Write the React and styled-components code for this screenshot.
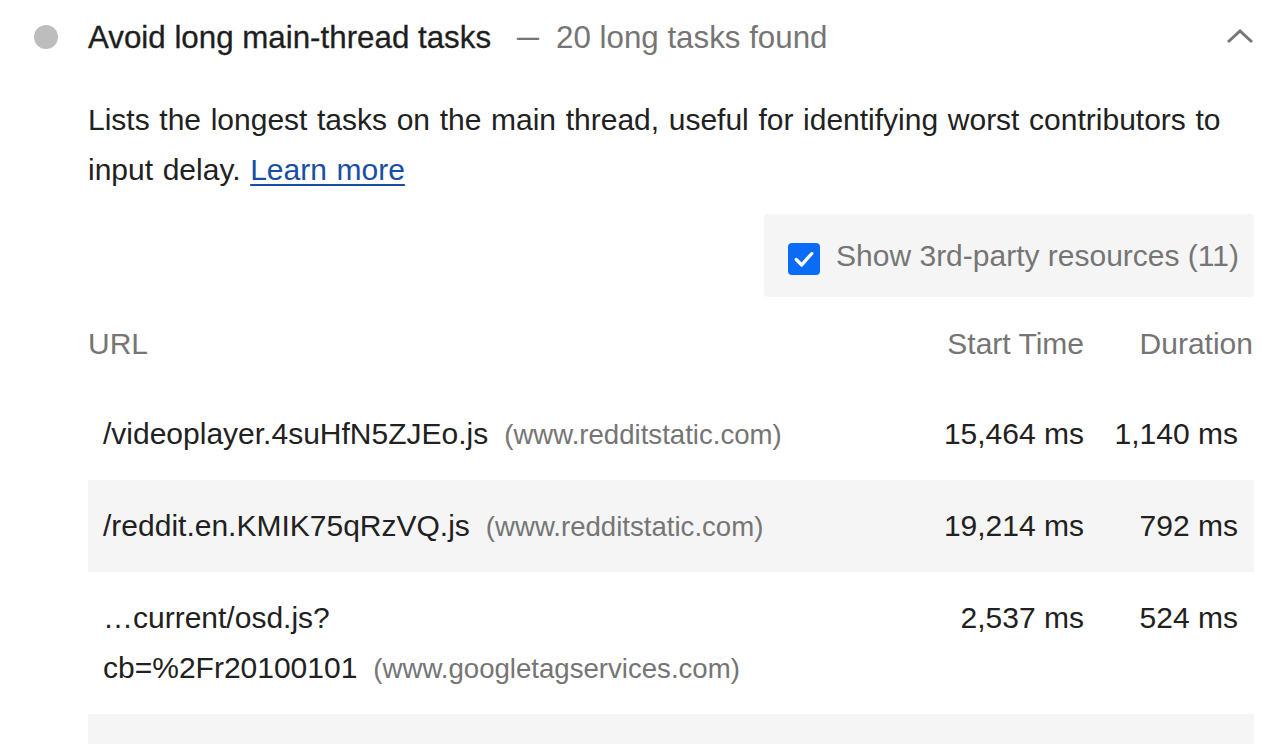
import React from 'react';
import styled, { createGlobalStyle } from 'styled-components';

const GlobalStyle = createGlobalStyle`
  html, body {
    margin: 0;
    padding: 0;
    background: #fff;
  }
  body {
    font-family: "Liberation Sans", Arial, Helvetica, sans-serif;
    color: #212121;
  }
`;

const Audit = styled.div`
  display: flex;
  padding: 13px 28px 0 34px;
`;

const Score = styled.div`
  flex: none;
  width: 24px;
  height: 24px;
  border-radius: 50%;
  background-color: #bdbdbd;
  margin-top: 12px;
  margin-right: 30px;
`;

const Body = styled.div`
  flex: 1;
  min-width: 0;
`;

const Header = styled.div`
  display: flex;
  align-items: center;
  height: 50px;
  font-size: 31.3px;
  line-height: 50px;
`;

const Title = styled.span`
  color: #1e1e1e;
  -webkit-text-stroke: 0.3px #1e1e1e;
`;

const Dash = styled.span`
  font-size: 22px;
  font-weight: 700;
  color: #757575;
  margin: 0 17px 0 26px;
`;

const DisplayText = styled.span`
  color: #757575;
  flex: 1;
`;

const Chevron = styled.svg`
  width: 28px;
  height: 16px;
  margin-top: -4px;
`;

const Description = styled.p`
  margin: 32px 0 0;
  font-size: 30px;
  word-spacing: 1.3px;
  line-height: 50px;
  color: #212121;
  > a {
    color: #174ea6;
    text-decoration: underline;
    text-underline-offset: 4px;
    text-decoration-thickness: 2px;
  }
`;

const FilterRow = styled.div`
  display: flex;
  justify-content: flex-end;
  margin-top: 19px;
`;

const Filter = styled.label`
  display: flex;
  align-items: center;
  gap: 16px;
  height: 83px;
  padding: 0 15px 0 24px;
  background-color: #f5f5f5;
  border-radius: 4px;
  font-size: 30px;
  color: #757575;
`;

const Checkbox = styled.span`
  flex: none;
  width: 32px;
  height: 32px;
  margin-top: 6px;
  border-radius: 4px;
  background-color: #0a6cf6;
  display: flex;
  align-items: center;
  justify-content: center;
  > svg {
    width: 22px;
    height: 22px;
  }
`;

const Table = styled.div`
  margin-top: 22px;
  font-size: 30px;
`;

const Row = styled.div`
  display: flex;
  align-items: flex-start;
  padding: ${p => (p.head ? '0 1px 19px 0' : '21px 16px 21px 15px')};
  background-color: ${p => (p.striped ? '#f5f5f5' : 'transparent')};
  color: ${p => (p.head ? '#757575' : '#212121')};
  line-height: 50px;
`;

const UrlCell = styled.div`
  flex: 1;
  min-width: 0;
`;

const Host = styled.span`
  font-size: 27.6px;
  line-height: 1;
  color: #757575;
  margin-left: 16px;
`;

const StartCell = styled.div`
  flex: none;
  text-align: right;
  width: 220px;
`;

const DurationCell = styled.div`
  flex: none;
  text-align: right;
  width: ${p => (p.head ? '169px' : '154px')};
`;

const rows = [
  { url: ['/videoplayer.4suHfN5ZJEo.js'], host: 'www.redditstatic.com', start: '15,464 ms', duration: '1,140 ms' },
  { url: ['/reddit.en.KMIK75qRzVQ.js'], host: 'www.redditstatic.com', start: '19,214 ms', duration: '792 ms' },
  { url: ['…current/osd.js?', 'cb=%2Fr20100101'], host: 'www.googletagservices.com', start: '2,537 ms', duration: '524 ms' },
  { url: [''], host: '', start: '', duration: '' },
];

const App = () => {
  return (
    <>
      <GlobalStyle />
      <Audit>
        <Score />
        <Body>
          <Header>
            <Title>Avoid long main-thread tasks</Title>
            <Dash>—</Dash>
            <DisplayText>20 long tasks found</DisplayText>
            <Chevron viewBox="0 0 28 16">
              <path d="M2 14 L14 3 L26 14" fill="none" stroke="#757575" strokeWidth="3" />
            </Chevron>
          </Header>
          <Description>
            Lists the longest tasks on the main thread, useful for identifying worst contributors to
            input delay. <a href="#">Learn more</a>
          </Description>
          <FilterRow>
            <Filter>
              <Checkbox>
                <svg viewBox="0 0 24 24">
                  <path d="M3.5 12.5 L9.5 18.5 L20.5 6" fill="none" stroke="#fff" strokeWidth="3.6" strokeLinecap="round" strokeLinejoin="round" />
                </svg>
              </Checkbox>
              Show 3rd-party resources (11)
            </Filter>
          </FilterRow>
          <Table>
            <Row head>
              <UrlCell>URL</UrlCell>
              <StartCell>Start Time</StartCell>
              <DurationCell head>Duration</DurationCell>
            </Row>
            {rows.map((r, i) => (
              <Row key={i} striped={i % 2 === 1}>
                <UrlCell>
                  {r.url.map((part, j) => (
                    <React.Fragment key={j}>
                      {j > 0 && <br />}
                      {part}
                    </React.Fragment>
                  ))}
                  {r.host && <Host>({r.host})</Host>}
                  {!r.host && '\u00a0'}
                </UrlCell>
                <StartCell>{r.start}</StartCell>
                <DurationCell>{r.duration}</DurationCell>
              </Row>
            ))}
          </Table>
        </Body>
      </Audit>
    </>
  );
};

export default App;
